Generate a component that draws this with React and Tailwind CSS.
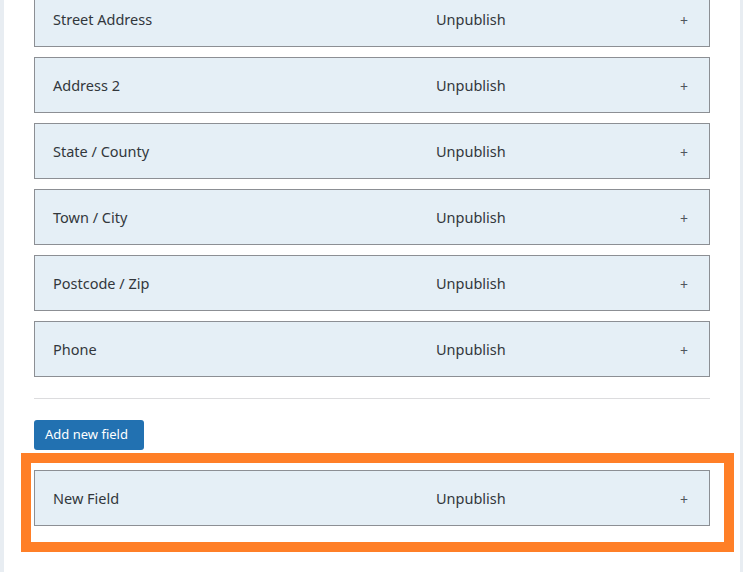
import React from 'react';

const fields = ['Street Address', 'Address 2', 'State / County', 'Town / City', 'Postcode / Zip', 'Phone'];

function FieldRow({ label }) {
  return (
    <div className="h-[56px] pt-[2px] flex items-center border border-[#8c8f94] bg-[#e5eff6] text-[14.5px] text-[#32373c]">
      <span className="pl-[18px] w-[401px]">{label}</span>
      <span className="flex-1">Unpublish</span>
      <span className="w-[50px] text-center text-[14px] text-[#50575e]">+</span>
    </div>
  );
}

export default function App() {
  return (
    <div className="w-[743px] h-[572px] overflow-hidden flex bg-[#e8edf2]" style={{ fontFamily: '"Noto Sans", "Open Sans", sans-serif' }}>
      <div className="w-[4px]" />
      <div className="w-[736px] bg-white px-[30px]">
        {/* existing fields */}
        <div className="mt-[-9px] flex flex-col gap-[10px]">
          {fields.map((f) => (
            <FieldRow key={f} label={f} />
          ))}
        </div>

        <div className="mt-[21px] h-px bg-[#dcdcde]" />

        <button className="mt-[21px] h-[30px] w-[110px] rounded-[3px] bg-[#2271b1] text-white text-[13px] text-left pl-[11px]">
          Add new field
        </button>

        {/* highlighted new field */}
        <div className="mt-[3px] ml-[-13px] mr-[-24px] border-[10px] border-[#ff7f27] pt-[7px] pb-[16px] pl-[3px] pr-[14px]">
          <FieldRow label="New Field" />
        </div>
      </div>
      <div className="flex-1" />
    </div>
  );
}
